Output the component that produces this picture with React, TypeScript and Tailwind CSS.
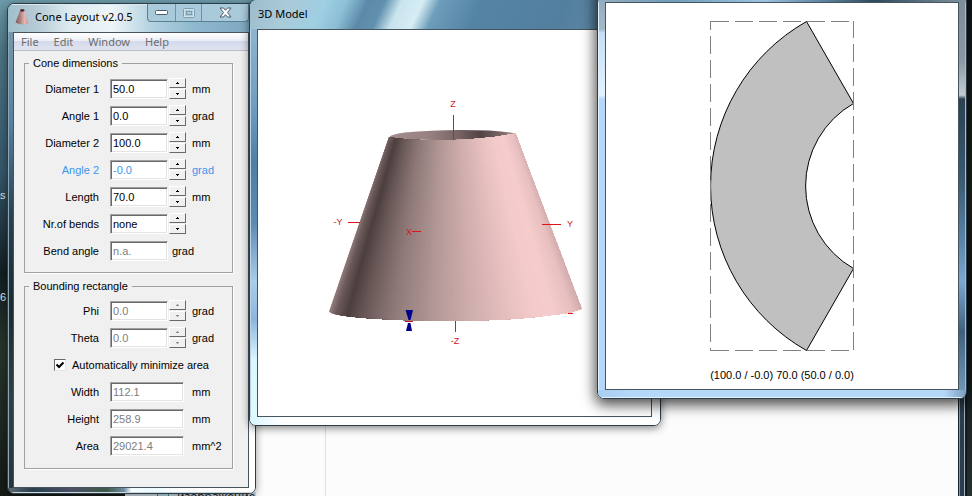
import { ReactNode } from 'react'
import clsx from 'clsx'

interface FieldProps {
  id: string
  label: string
  value: string
  unit: string
  spinner?: boolean
  wide?: boolean
  disabled?: boolean
  linked?: boolean
}

interface GlassWindowProps {
  className: string
  glass: string
  left: string
  right: string
  bottom: string
  header: ReactNode
  children: ReactNode
}

const dimensions: FieldProps[] = [
  { id: 'diameter1', label: 'Diameter 1', value: '50.0', unit: 'mm', spinner: true },
  { id: 'angle1', label: 'Angle 1', value: '0.0', unit: 'grad', spinner: true },
  { id: 'diameter2', label: 'Diameter 2', value: '100.0', unit: 'mm', spinner: true },
  { id: 'angle2', label: 'Angle 2', value: '-0.0', unit: 'grad', spinner: true, linked: true },
  { id: 'length', label: 'Length', value: '70.0', unit: 'mm', spinner: true },
  { id: 'bends', label: 'Nr.of bends', value: 'none', unit: '', spinner: true },
  { id: 'bendAngle', label: 'Bend angle', value: 'n.a.', unit: 'grad', disabled: true },
]

const rotation: FieldProps[] = [
  { id: 'phi', label: 'Phi', value: '0.0', unit: 'grad', spinner: true, disabled: true },
  { id: 'theta', label: 'Theta', value: '0.0', unit: 'grad', spinner: true, disabled: true },
]

const bounds: FieldProps[] = [
  { id: 'width', label: 'Width', value: '112.1', unit: 'mm', wide: true, disabled: true },
  { id: 'height', label: 'Height', value: '258.9', unit: 'mm', wide: true, disabled: true },
  { id: 'area', label: 'Area', value: '29021.4', unit: 'mm^2', wide: true, disabled: true },
]

function SpinButton({ label, up, disabled }: { label: string; up?: boolean; disabled?: boolean }) {
  return (
    <button
      type="button"
      aria-label={label}
      disabled={disabled}
      className="flex h-[10px] w-[17px] items-center justify-center border border-t-white border-l-white border-r-[#696969] border-b-[#696969] bg-[#f0f0f0]"
    >
      <svg width="3" height="2" viewBox="0 0 3 2" shapeRendering="crispEdges" fill={disabled ? '#8c8c8c' : '#000'}>
        <path d={up ? 'M1 0h1v1h1v1H0V1h1z' : 'M0 0h3v1H2v1H1V1H0z'} />
      </svg>
    </button>
  )
}

function Field({ id, label, value, unit, spinner, wide, disabled, linked }: FieldProps) {
  return (
    <div className={clsx('flex h-[27px] items-center', linked && 'text-[#3c96ee]')}>
      <label htmlFor={id} className="mr-[11px] w-[74px] text-right">{label}</label>
      <input
        id={id}
        type="text"
        defaultValue={value}
        disabled={disabled}
        className={clsx(
          'h-5 border border-t-[#a0a0a0] border-l-[#a0a0a0] border-r-white border-b-white bg-white pl-[2px] shadow-[inset_1px_1px_#696969,inset_-1px_-1px_#e3e3e3] outline-none',
          wide ? 'mr-2 w-[74px]' : 'w-[58px]',
          disabled && 'text-[#7d7d7d]',
        )}
      />
      {spinner && (
        <div className="mr-[6px] ml-px flex flex-col gap-px">
          <SpinButton label={`Increase ${label}`} up disabled={disabled} />
          <SpinButton label={`Decrease ${label}`} disabled={disabled} />
        </div>
      )}
      <span className={clsx(!spinner && !wide && 'ml-1')}>{unit}</span>
    </div>
  )
}

function Group({ title, children, className }: { title: string; children: ReactNode; className: string }) {
  return (
    <fieldset className={clsx('border border-[#a0a0a0] shadow-[1px_1px_0_#fff]', className)}>
      <legend className="ml-1 px-1 leading-4">{title}</legend>
      {children}
    </fieldset>
  )
}

function GlassWindow({ className, glass, left, right, bottom, header, children }: GlassWindowProps) {
  return (
    <section className={clsx('absolute overflow-hidden rounded-[7px] border border-[#2c3c48]', className)}>
      <div className={glass}>{header}</div>
      <div className="flex">
        <div className={left} />
        <div className="min-w-0 flex-1 border border-[#46545e] bg-white">{children}</div>
        <div className={right} />
      </div>
      <div className={bottom} />
    </section>
  )
}

function ConeIcon() {
  return (
    <svg width="16" height="18" viewBox="0 0 16 18" className="shrink-0">
      <defs>
        <linearGradient id="iconCone">
          <stop offset="0" stopColor="#7c5a58" />
          <stop offset="0.35" stopColor="#a87f7c" />
          <stop offset="0.7" stopColor="#e5b6b3" />
          <stop offset="1" stopColor="#c99793" />
        </linearGradient>
      </defs>
      <path d="M5 2.5 0.5 14.5Q6 18 13.5 15.5L9.500 2.500Z" fill="url(#iconCone)" />
      <ellipse cx="7.300" cy="2.400" rx="2.300" ry="1.400" fill="#4c3535" />
    </svg>
  )
}

function CaptionButtons() {
  return (
    <div className="flex h-[18px] self-start rounded-b-[4px] border border-t-0 border-[#5e7f92] bg-[#a9cadb]">
      <button type="button" aria-label="Minimize" className="flex w-7 items-center justify-center border-r border-[#6f92a5]">
        <svg width="13" height="6" viewBox="0 0 13 6">
          <rect x="0.5" y="0.500" width="12" height="4" rx="1" fill="#fff" stroke="#4a5b66" />
        </svg>
      </button>
      <button type="button" aria-label="Maximize" disabled className="flex w-[26px] items-center justify-center border-r border-[#6f92a5]">
        <svg width="12" height="10" viewBox="0 0 12 10" fill="none">
          <rect x="1" y="1" width="10" height="8" rx="1" stroke="#d2e3ec" strokeWidth="2" />
          <rect x="0.500" y="0.500" width="11" height="9" rx="1" stroke="#7e9cab" />
          <rect x="3.500" y="3.500" width="5" height="3" stroke="#7e9cab" />
        </svg>
      </button>
      <button type="button" aria-label="Close" className="flex w-[46px] items-center justify-center">
        <svg width="13" height="11" viewBox="0 0 13 11">
          <path
            d="M1 1h3.500l2 2.300 2-2.300H12L8.500 5.500 12 10H8.500l-2-2.300-2 2.300H1l3.500-4.500z"
            fill="#fff"
            stroke="#4a5b66"
            strokeLinejoin="round"
          />
        </svg>
      </button>
    </div>
  )
}

// position across the surface -> shade
const shades: [number, number[]][] = [
  [0, [150, 128, 128]],
  [0.03, [108, 90, 90]],
  [0.075, [77, 63, 63]],
  [0.14, [104, 87, 87]],
  [0.25, [141, 120, 119]],
  [0.4, [176, 150, 149]],
  [0.55, [206, 173, 172]],
  [0.7, [230, 192, 191]],
  [0.8, [244, 202, 202]],
  [0.88, [245, 203, 203]],
  [0.95, [232, 192, 192]],
  [1, [205, 169, 169]],
]

function shadeAt(t: number) {
  const i = Math.max(1, shades.findIndex(([stop]) => stop >= t))
  const [a, from] = shades[i - 1]
  const [b, to] = shades[i]
  const k = (t - a) / (b - a)
  return `rgb(${from.map((c, n) => Math.round(c + (to[n] - c) * k)).join(',')})`
}

const SLICES = 160

function ConeModel() {
  return (
    <svg viewBox="258 30 393 386" className="block w-full" role="img" aria-label="Cone model">
      <defs>
        <clipPath id="coneBody">
          <path d="M389 137Q400 139 412 139.500Q432 141 455 140Q490 139 515.500 133.500L581.500 308.500Q575 312 560 314Q510 321 445 321Q370 320 339 315Q331 313.500 329 311.500Z" />
        </clipPath>
        <linearGradient id="coneInside">
          <stop offset="0" stopColor="#a28b8b" />
          <stop offset="0.3" stopColor="#9a8282" />
          <stop offset="0.55" stopColor="#776364" />
          <stop offset="0.72" stopColor="#514344" />
          <stop offset="0.9" stopColor="#806a6b" />
          <stop offset="1" stopColor="#b69a9a" />
        </linearGradient>
      </defs>
      <path d="M389.500 137Q390 134.500 405 132.500Q430 130 460 130Q500 130 515.500 133.500Q500 139 455 140.500Q405 140 389.500 137Z" fill="url(#coneInside)" />
      <g clipPath="url(#coneBody)">
        {Array.from({ length: SLICES }, (_, i) => {
          const t = i / SLICES
          return (
            <path
              key={i}
              d={`M${388 + 129 * t} 130L517 130L588 324L${324 + 264 * t} 324Z`}
              fill={shadeAt(t)}
            />
          )
        })}
      </g>
      <g fill="#e01414">
        <rect x="453" y="115" width="1" height="25" />
        <rect x="455" y="321" width="1" height="11" />
        <rect x="348" y="222" width="12" height="1" />
        <rect x="542" y="224" width="19" height="1" />
        <rect x="412" y="231" width="9" height="1" />
        <rect x="568" y="313" width="5" height="1" />
      </g>
      <g fill="#00008c">
        <path d="M405.500 310H413L410.500 320H408.500Z" />
        <path d="M408 323H410.500L412 331H406Z" />
      </g>
      <rect x="405" y="321" width="8" height="1" fill="#c01828" />
      <g fill="#d01818" fontSize="9" fontFamily="'Liberation Sans', Arial, sans-serif" textAnchor="middle">
        <text x="453" y="107">Z</text>
        <text x="455" y="344">-Z</text>
        <text x="338" y="225">-Y</text>
        <text x="570" y="227">Y</text>
        <text x="409" y="235">X</text>
      </g>
    </svg>
  )
}

function FlatPattern() {
  return (
    <svg viewBox="606 3 352 362" className="block w-full" role="img" aria-label="Flat pattern">
      <path
        d="M806.500 21.500A189 189 0 0 0 806.500 350.500L853.500 268.500A95 95 0 0 1 853.500 103.500Z"
        fill="#c0c0c0"
        stroke="#000"
      />
      <g stroke="#808080" strokeDasharray="18 6" shapeRendering="crispEdges">
        <path d="M711 21.500H854" />
        <path d="M711 350.500H854" />
        <path d="M710.500 21V351" strokeDashoffset="9" />
        <path d="M853.500 21V351" strokeDashoffset="1" />
      </g>
    </svg>
  )
}

export default function App() {
  return (
    <main className="relative h-screen overflow-hidden bg-[linear-gradient(#6d9aa8,#4c7484_10%,#35566a_35%,#121e22_55%,#26352a_70%,#151a16)] font-['Liberation_Sans',Arial,sans-serif] text-[11px] leading-4 text-black">
      <span className="absolute top-[187px] left-0 text-[#dfe6ea]">s</span>
      <span className="absolute top-[289px] left-0 text-[#dfe6ea]">6</span>
      <div className="absolute inset-y-0 right-0 w-[5px] bg-[linear-gradient(#14191a,#1d2622_40%,#0b1318_60%,#24302c)]" />

      {/* file manager behind the other windows */}
      <section className="absolute top-8 right-[5px] bottom-0 left-[125px] flex border-r border-[#0d151b] bg-[#fcfcfc]">
        <div className="w-[201px] border-r border-[#d3e3ef]" />
        <div className="flex-1" />
        <div className="w-2 border-x border-[#17222b] bg-[#2b3d4d] shadow-[inset_1px_0_#8599a8,inset_-1px_0_#9fb0bc]" />
        <div className="absolute bottom-0 left-0 h-1 w-[131px] bg-[#cfdee4]" />
        <div className="absolute top-[458px] left-8 h-3 w-3 border border-[#4a8a94] bg-[#b4dde2]" />
        <span className="absolute top-[457px] left-[52px] font-['Noto_Sans',sans-serif] text-xs text-[#222]">изображение</span>
      </section>

      <GlassWindow
        className="top-[3px] left-[7px] w-[249px] shadow-[0_2px_8px_rgba(0,0,0,0.4)]"
        glass="h-7 bg-[linear-gradient(90deg,#9fbfcc,#b7ccd6_12%,#ddeaf0_25%,#edf5f8_42%,#b4d2e0_58%,#8fb9cf_75%,#7ca6bf)] shadow-[inset_0_1px_#dceaf0]"
        left="w-[5px] bg-[linear-gradient(#7697aa,#54809f_20%,#294252_40%,#1a2a30_60%,#2f4148_80%,#26343c)] shadow-[inset_1px_0_#8fa6b3]"
        right="w-[6px] bg-white"
        bottom="h-[5px] bg-[linear-gradient(90deg,#5e6b70,#28404e_10%,#4b4f66_25%,#3d5a48_40%,#6f8ea4_47%,#f6fdff_50%,#e9fbff_58%,#fff_70%)] shadow-[inset_0_-1px_#c9d8dd]"
        header={
          <header className="flex h-7 items-center pr-[6px] pb-[3px] pl-[7px]">
            <ConeIcon />
            <h1 className="ml-1 flex-1 font-['Noto_Sans',sans-serif] text-[11px] whitespace-nowrap">Cone Layout v2.0.5</h1>
            <CaptionButtons />
          </header>
        }
      >
        <div className="bg-[#f0f0f0]">
          <nav className="flex h-[18px] items-center gap-[15px] border-b border-[#b8bcc6] bg-[linear-gradient(#fff,#eceff7_45%,#d5daeb_50%,#e0e4f1)] pl-[7px] font-['Noto_Sans',sans-serif] text-[#6d6d6d]">
            <button type="button">File</button>
            <button type="button">Edit</button>
            <button type="button">Window</button>
            <button type="button">Help</button>
          </nav>
          <form className="flex flex-col gap-[5px] pt-1 pr-[15px] pb-[18px] pl-[10px]">
            <Group title="Cone dimensions" className="pt-1 pb-2">
              {dimensions.map((field) => <Field key={field.id} {...field} />)}
            </Group>
            <Group title="Bounding rectangle" className="pt-[3px] pb-[9px]">
              {rotation.map((field) => <Field key={field.id} {...field} />)}
              <div className="flex h-[27px] items-center pl-[29px]">
                <span className="grid">
                  <input
                    id="autoMinimize"
                    type="checkbox"
                    defaultChecked
                    className="col-start-1 row-start-1 h-3 w-3 appearance-none border border-t-[#696969] border-l-[#696969] border-r-[#e3e3e3] border-b-[#e3e3e3] bg-white"
                  />
                  <svg width="12" height="12" viewBox="0 0 12 12" className="pointer-events-none col-start-1 row-start-1">
                    <path d="M2.500 5.500 5 8 9.500 3.500" fill="none" stroke="#000" strokeWidth="2" />
                  </svg>
                </span>
                <label htmlFor="autoMinimize" className="ml-[6px]">Automatically minimize area</label>
              </div>
              {bounds.map((field) => <Field key={field.id} {...field} />)}
            </Group>
          </form>
        </div>
      </GlassWindow>

      <GlassWindow
        className="-top-px left-[249px] w-[412px] shadow-[0_2px_9px_rgba(0,0,0,0.5)]"
        glass="h-[29px] bg-[linear-gradient(115deg,#9dbccb,#a9cbda_10%,#9fcfe2_18%,#8cc0d6_23%,#5d89a8_28%,#6191ae_32%,#c9e4ee_36%,#d7edf4_41%,#6d9dba_45%,#5484a4_55%,#537f9f_75%,#6c8fa8)]"
        left="w-[7px] bg-[linear-gradient(#8fb5d0,#6f9dc0_20%,#4f7da3_35%,#5d8ab3_50%,#a9ccec_65%,#8db6de_75%,#d9f5ff_85%,#dffbff)] shadow-[inset_1px_0_#b9d3e3]"
        right="w-2 bg-white"
        bottom="h-2 bg-[linear-gradient(90deg,#d8f6ff,#fff_8%)]"
        header={
          <header className="flex h-[29px] items-center pb-[2px] pl-2">
            <h2 className="font-['Noto_Sans',sans-serif] text-[11px]">3D Model</h2>
          </header>
        }
      >
        <ConeModel />
      </GlassWindow>

      <GlassWindow
        className="-top-[28px] left-[597px] w-[370px] shadow-[0_4px_14px_2px_rgba(0,0,0,0.7)]"
        glass="h-[29px] bg-[linear-gradient(90deg,#94adbe,#6f9cba_20%,#9cc4de_45%,#5f87a4_60%,#2f4a5e_75%,#7e93a0)]"
        left="w-[7px] bg-[linear-gradient(#94adbe,#a3b9c9_7%,#c3dff8_8%,#e4f2fe_24%,#b5d8fa_25%,#b5d8fa)] shadow-[inset_1px_0_#e3f1fb]"
        right="w-[7px] bg-[linear-gradient(#7d8c98,#8a98a3_15%,#c3ccd2_24%,#2b4152_25%,#3a5870_45%,#5680a3_60%,#7ba7d0_72%,#40617d_85%,#6f96b8)] shadow-[inset_-1px_0_#a5bccc]"
        bottom="h-2 bg-[linear-gradient(90deg,#a9cef2,#b5d8fa_10%,#b5d8fa_94%,#7b9dbb)] shadow-[inset_0_-1px_#e1f0fc]"
        header={null}
      >
        <FlatPattern />
        <p className="pb-1 text-center leading-5">(100.0 / -0.0) 70.0 (50.0 / 0.0)</p>
      </GlassWindow>
    </main>
  )
}
